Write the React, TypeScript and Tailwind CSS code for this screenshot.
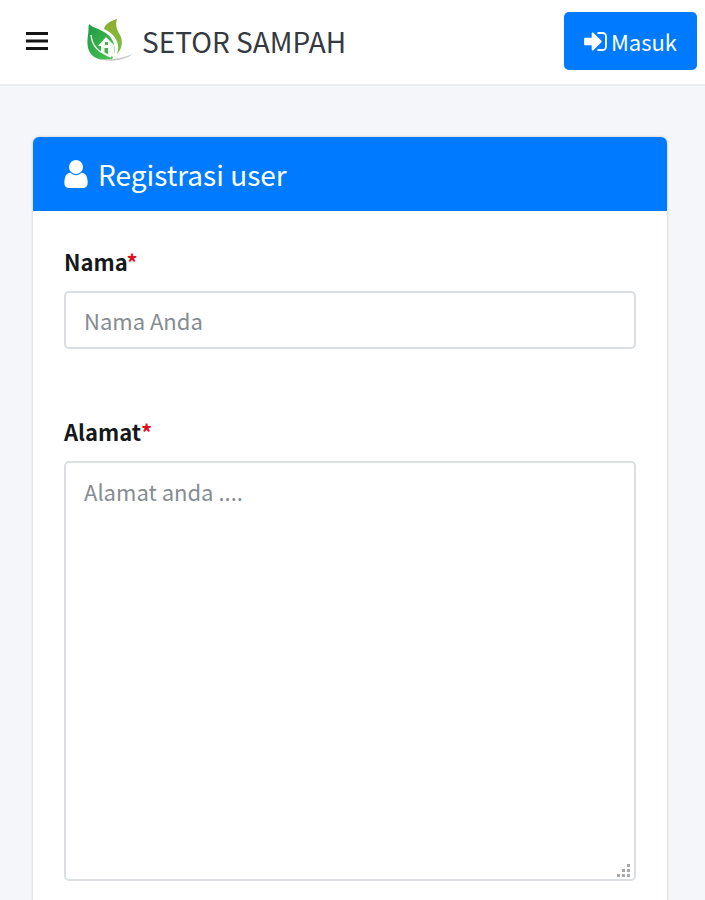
import { useState } from "react";

function SignInIcon() {
  return (
    <svg viewBox="0 256 1536 1280" className="h-[19px] w-[23px] shrink-0 fill-current" aria-hidden="true">
      <path d="M1184 896q0 26-19 45l-544 544q-19 19-45 19t-45-19-19-45v-288h-448q-26 0-45-19t-19-45v-384q0-26 19-45t45-19h448v-288q0-26 19-45t45-19 45 19l544 544q19 19 19 45zm352-352v704q0 119-84.500 203.500t-203.500 84.500h-320q-13 0-22.500-9.500t-9.500-22.500q0-4-1-20t-.5-26.500 3-23.500 10-19.500 20.500-6.500h320q66 0 113-47t47-113v-704q0-66-47-113t-113-47h-312l-11.500-1-11.500-3-8-5.500-7-9-2-13.500q0-4-1-20t-.5-26.500 3-23.500 10-19.500 20.500-6.500h320q119 0 203.500 84.500t84.500 203.500z" />
    </svg>
  );
}

function UserIcon() {
  return (
    <svg viewBox="256 128 1280 1536" className="h-7 w-6 shrink-0 fill-current" aria-hidden="true">
      <path d="M1536 1399q0 109-62.500 187t-150.500 78h-854q-88 0-150.500-78t-62.500-187q0-85 8.500-160.500t31.500-152 58.500-131 94-89 134.500-34.500q131 128 313 128t313-128q76 0 134.500 34.500t94 89 58.500 131 31.500 152 8.500 160.500zm-256-887q0 159-112.500 271.500t-271.500 112.500-271.500-112.500-112.500-271.500 112.500-271.500 271.500-112.500 271.500 112.500 112.500 271.500z" />
    </svg>
  );
}

function Logo() {
  return (
    <svg viewBox="0 0 48 44" className="h-11 w-12 shrink-0" aria-hidden="true">
      <defs>
        <linearGradient id="leafLeft" x1="0" y1="0" x2="1" y2="1">
          <stop offset="0" stopColor="#1f9a44" />
          <stop offset="1" stopColor="#4cc455" />
        </linearGradient>
        <linearGradient id="leafRight" x1="0" y1="0" x2="0" y2="1">
          <stop offset="0" stopColor="#93ad2f" />
          <stop offset="1" stopColor="#6fc043" />
        </linearGradient>
      </defs>
      {/* back leaf */}
      <path d="M31 0C24 2 19 5 18 10C25 13 31 19 32 26C32.500 29 32 32 31 35C35 31 36.500 26 35.500 20C34 14 28 9 31 0Z" fill="url(#leafRight)" />
      {/* front leaf */}
      <path d="M3 5C7 9 12 9 18 13C25 17 28 22 28.500 29C28.500 34 28 37 26 40C16 42 9 40 5 35C1 30 1 23 2 16C3 11 2 8 3 5Z" fill="url(#leafLeft)" />
      <path d="M5 16C6 26 11 33 25 38" fill="none" stroke="#e9f8e6" strokeWidth="1.500" />
      {/* house */}
      <path d="M12 27L20 18L28 26V38L22 37L15 33V27Z" fill="#f6fff4" />
      <path d="M19 23h3v3h-3zM18.500 29h3.500v6l-3.500-1.500z" fill="#4fae52" />
      <path d="M10 39C20 42 34 40 47 35C37 42 22 44 10 39Z" fill="#c3cdc1" />
    </svg>
  );
}

function Label({ htmlFor, text }: { htmlFor: string; text: string }) {
  return (
    <label htmlFor={htmlFor} className="mb-3 block text-[22px] leading-9 font-bold text-[#16191c]">
      {text}
      <span className="text-[#dc1020]">*</span>
    </label>
  );
}

export default function App() {
  const [nama, setNama] = useState("");
  const [alamat, setAlamat] = useState("");

  return (
    <div className="min-h-screen bg-[#f4f6f9] font-['Noto_Sans_CJK_JP','Noto_Sans',sans-serif] text-[#212529]">
      <header className="flex items-center justify-between border-b-2 border-[#e9ebee] bg-white pt-3 pr-2 pb-[14px] pl-[26px]">
        <div className="flex items-center">
          <button type="button" aria-label="Menu" className="mr-[38px]">
            <svg viewBox="0 0 22 18" className="h-[18px] w-[22px] fill-[#141414]" aria-hidden="true">
              <path d="M0 0h22v3H0zM0 7.500h22v3H0zM0 15h22v3H0z" />
            </svg>
          </button>
          <a href="#" className="flex items-center gap-2 text-[28px] leading-10 text-[#343a40]">
            <Logo />
            SETOR SAMPAH
          </a>
        </div>
        <button type="button" className="flex h-[58px] items-center gap-1 rounded-[5px] bg-[#007bff] px-5 text-[22px] text-white">
          <SignInIcon />
          Masuk
        </button>
      </header>

      <main className="pt-[51px] pr-[38px] pl-[33px]">
        <section className="rounded-md bg-white shadow-[0_0_3px_rgba(0,0,0,0.2)]">
          <h1 className="flex items-center gap-[10px] rounded-t-md bg-[#007bff] px-[31px] py-4 text-[28px] leading-[42px] text-white">
            <UserIcon />
            Registrasi user
          </h1>

          <form className="px-[31px] pt-8 pb-12" onSubmit={(e) => e.preventDefault()}>
            <div className="mb-16">
              <Label htmlFor="nama" text="Nama" />
              <input
                id="nama"
                type="text"
                value={nama}
                onChange={(e) => setNama(e.target.value)}
                placeholder="Nama Anda"
                className="block h-[58px] w-full rounded-[5px] border-2 border-[#dcdfe2] bg-white px-[18px] text-[22px] text-[#495057] outline-none placeholder:text-[#868c91] focus:border-[#80bdff]"
              />
            </div>

            <div>
              <Label htmlFor="alamat" text="Alamat" />
              <div className="relative">
                <textarea
                  id="alamat"
                  value={alamat}
                  onChange={(e) => setAlamat(e.target.value)}
                  placeholder="Alamat anda ...."
                  className="block h-[420px] w-full resize-none rounded-[5px] border-2 border-[#dcdfe2] bg-white px-[18px] py-[10px] text-[22px] leading-9 text-[#495057] outline-none placeholder:text-[#868c91] focus:border-[#80bdff]"
                />
                <svg viewBox="0 0 13 13" className="pointer-events-none absolute right-[6px] bottom-1 h-[13px] w-[13px] fill-[#a9a9a9]" aria-hidden="true">
                  <path d="M10 0h3v3h-3zM5 5h3v3H5zM10 5h3v3h-3zM0 10h3v3H0zM5 10h3v3H5zM10 10h3v3h-3z" />
                </svg>
              </div>
            </div>
          </form>
        </section>
      </main>
    </div>
  );
}
